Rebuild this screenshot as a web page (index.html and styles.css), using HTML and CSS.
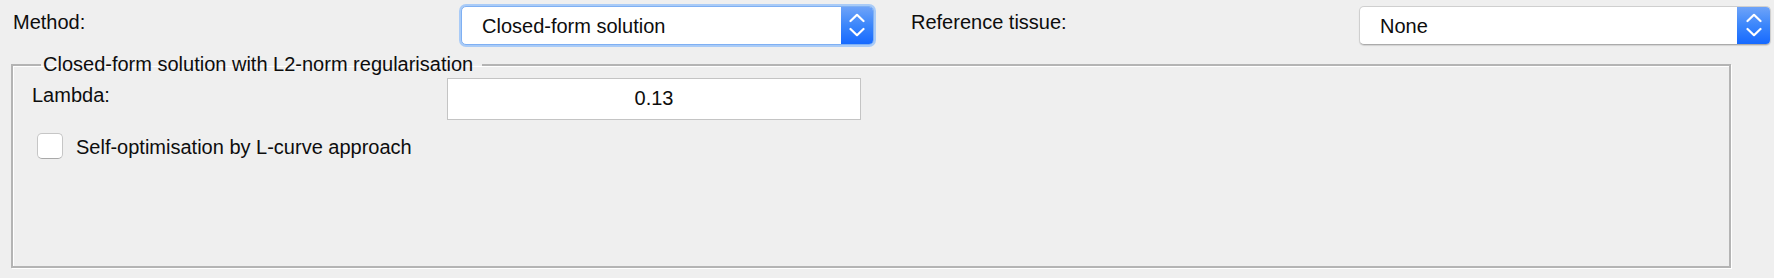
FILE: index.html
```html
<!DOCTYPE html>
<html>
<head>
<meta charset="utf-8">
<link rel="stylesheet" href="styles.css">
</head>
<body>
<div class="toprow">
  <div class="label">Method:</div>
  <div class="select focused">
    <span class="select-text">Closed-form solution</span>
    <span class="select-arrow">
      <svg width="16" height="26" viewBox="0 0 16 26"><path d="M1.5 8 L8 1.8 L14.5 8 M1.5 16 L8 22.2 L14.5 16" fill="none" stroke="#fff" stroke-width="2.2" stroke-linecap="round" stroke-linejoin="round"/></svg>
    </span>
  </div>
  <div class="spacer"></div>
  <div class="label">Reference tissue:</div>
  <div class="select">
    <span class="select-text">None</span>
    <span class="select-arrow">
      <svg width="16" height="26" viewBox="0 0 16 26"><path d="M1.5 8 L8 1.8 L14.5 8 M1.5 16 L8 22.2 L14.5 16" fill="none" stroke="#fff" stroke-width="2.2" stroke-linecap="round" stroke-linejoin="round"/></svg>
    </span>
  </div>
</div>
<fieldset class="group">
  <legend class="group-title">Closed-form solution with L2-norm regularisation</legend>
  <div class="field-row">
    <div class="field-label">Lambda:</div>
    <div class="textbox">0.13</div>
  </div>
  <div class="check-row">
    <span class="checkbox"></span>
    <span class="check-label">Self-optimisation by L-curve approach</span>
  </div>
</fieldset>
</body>
</html>
```
FILE: styles.css
```css
html, body {
  margin: 0;
  padding: 0;
  background: #efefef;
}
body {
  font-family: "Liberation Sans", Arial, sans-serif;
  font-size: 20px;
  color: #0d0d0d;
  width: 1774px;
  height: 278px;
  overflow: hidden;
}
.toprow {
  display: grid;
  grid-template-columns: 448px 413px 37px 448px 412px;
  padding: 6px 0 0 13px;
  height: 39px;
}
.label {
  align-self: start;
  margin-top: 5px;
  line-height: 23px;
}
.select {
  box-sizing: border-box;
  height: 39px;
  display: flex;
  align-items: stretch;
  background: #fff;
  border-radius: 5px;
  border: 1px solid #cfcfcf;
  border-bottom-color: #ababab;
  box-shadow: 0 1px 1px rgba(0,0,0,0.12);
  overflow: hidden;
}
.select.focused {
  border: 1px solid #7fb0f3;
  box-shadow: 0 0 0 2px #a9cbf7;
}
.select-text {
  flex: 1;
  padding: 1px 0 0 20px;
  display: flex;
  align-items: center;
  line-height: 23px;
}
.select-arrow {
  width: 33px;
  display: flex;
  align-items: center;
  justify-content: center;
  background: linear-gradient(#6ea3f8, #3b86fb 50%, #1669ff);
}
.select.focused .select-arrow {
  width: 32px;
}
.group {
  box-sizing: border-box;
  margin: 8px 0 0 11px;
  width: 1720px;
  height: 215px;
  padding: 0 0 0 19px;
  border: 2px solid #b4b4b4;
  box-shadow: inset 1px 1px 0 #fff, 1px 1px 0 #fff;
  min-width: 0;
}
.group-title {
  margin-left: 9px;
  padding: 0 9px 0 2px;
  line-height: 23px;
}
.field-row {
  display: grid;
  grid-template-columns: 415px 414px;
  margin-top: 2px;
}
.field-label {
  margin-top: 6px;
  line-height: 23px;
}
.textbox {
  box-sizing: border-box;
  height: 42px;
  background: #fff;
  border: 1px solid #c4c4c4;
  text-align: center;
  line-height: 38px;
  padding-bottom: 2px;
}
.check-row {
  display: flex;
  align-items: center;
  margin: 13px 0 0 5px;
}
.checkbox {
  box-sizing: border-box;
  width: 26px;
  height: 26px;
  border-radius: 5px;
  background: #fff;
  border: 1px solid #c6c6c6;
  border-bottom-color: #a9a9a9;
}
.check-label {
  margin-left: 13px;
  padding-top: 3px;
  line-height: 23px;
}
```
